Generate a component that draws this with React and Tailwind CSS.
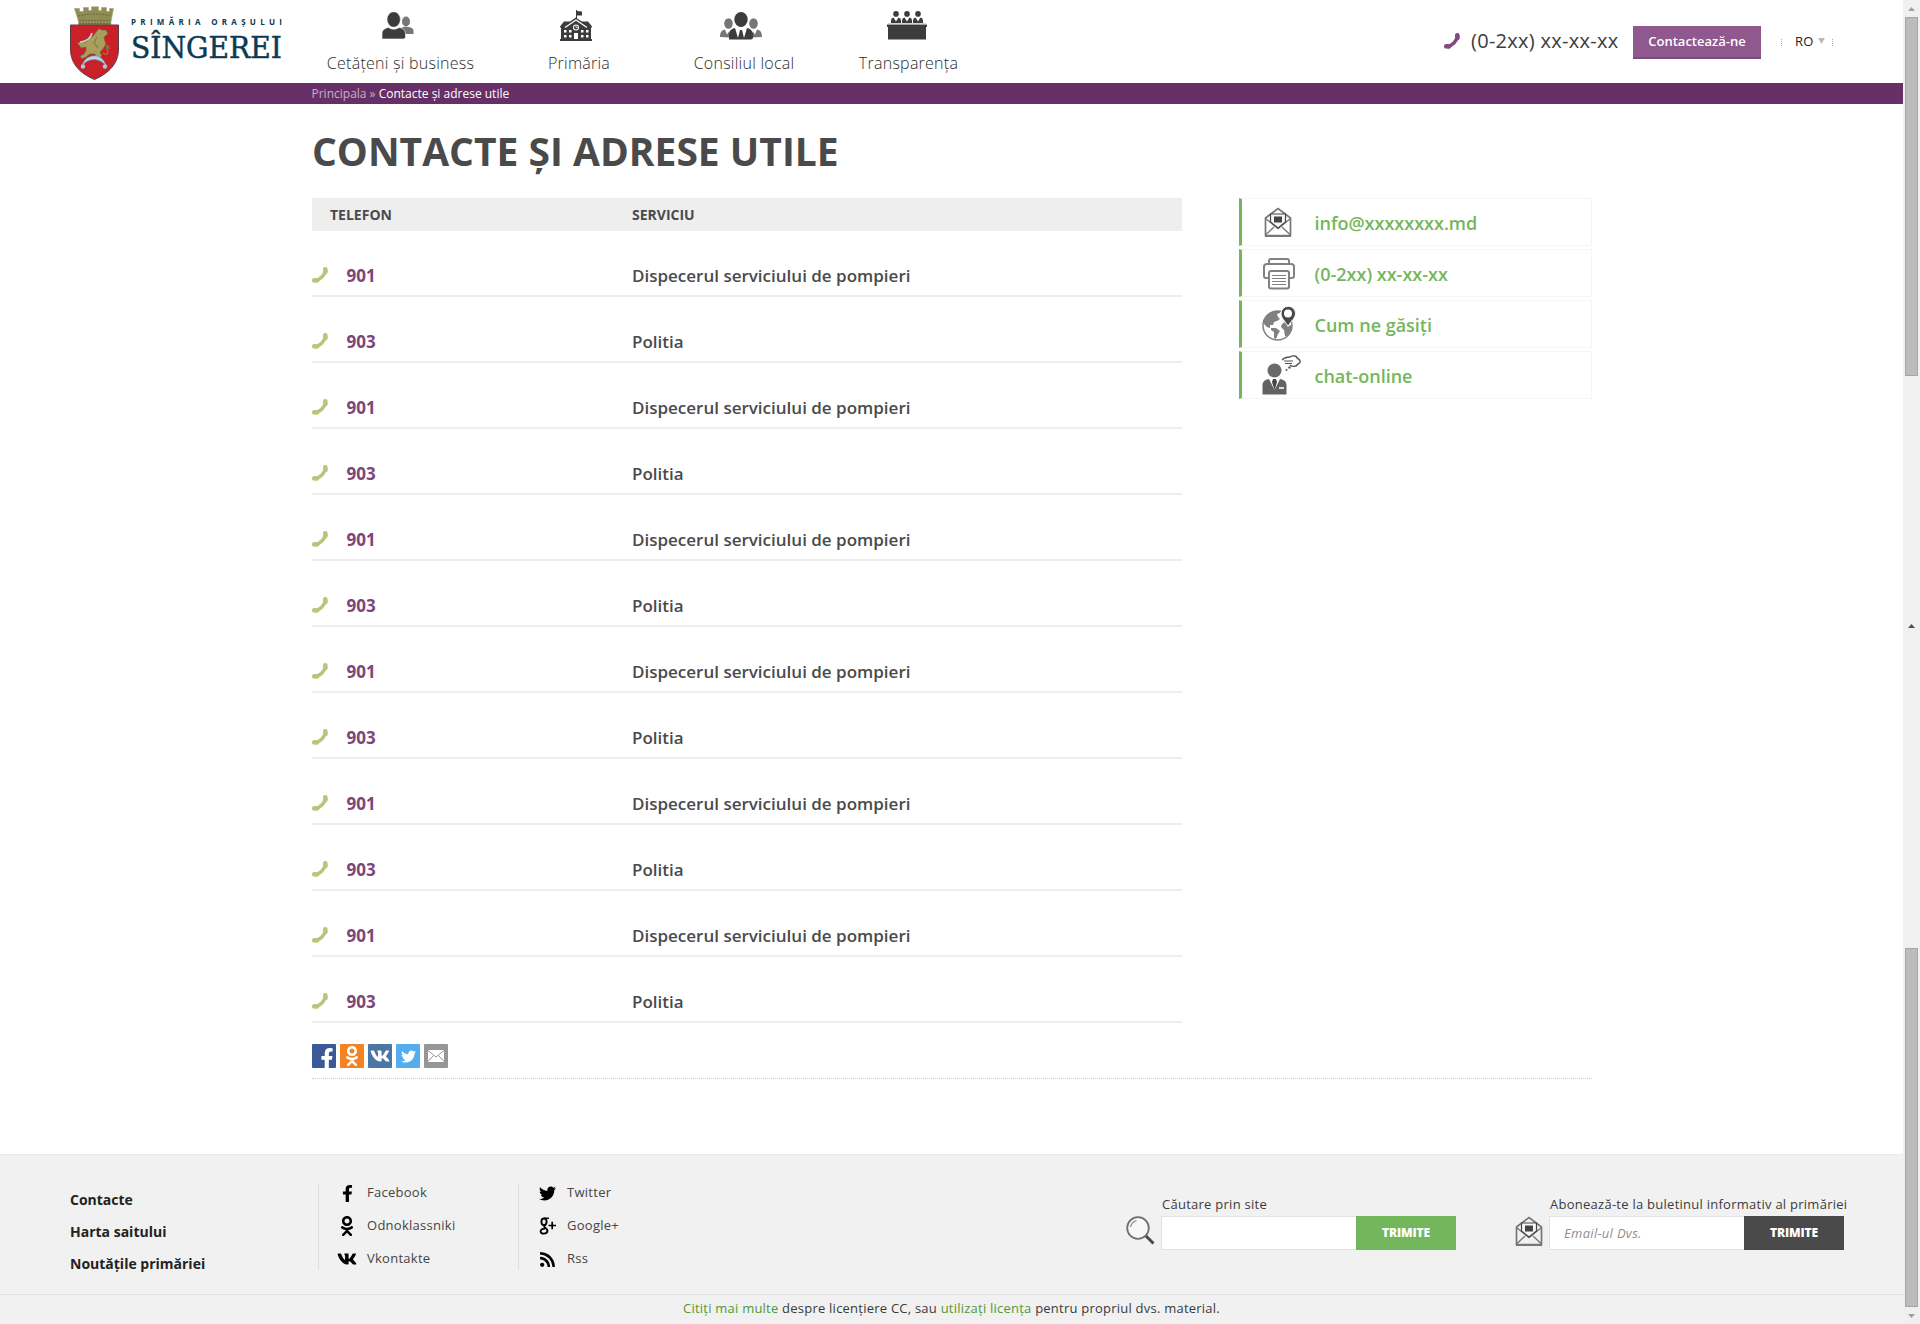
import React from "react";
import { FaFacebookF, FaTwitter, FaVk, FaOdnoklassniki, FaRss } from "react-icons/fa";

function Crest() {
  return (
    <svg width="51" height="77" viewBox="0 0 51 77" className="mt-px block shrink-0">
      <path d="M5.500 2.500h5v3h4V1.500h5v3h3V.800h7v3.700h3V1.500h5v4h3v-3h4l-2.500 13v4.500H9.500v-4.500z" fill="#8f8c55" stroke="#a5a374" strokeWidth=".6" />
      <path d="M9 10q17-4 33 0M10 14.500h31M10 17.500h31" stroke="#6d6b3b" strokeWidth="1" strokeDasharray="2 1" fill="none" />
      <path d="M1.500 19h48v24c0 14-9 24-24 30.500C10 67 1.500 57 1.500 43z" fill="#c9202a" stroke="#5c3c40" />
      <path d="M27 26l3-3.500 3 1.500 4 0 2 4-3 2-1 2 2 6-3 5-3 3 2 4-3 2-3-1-1-3-5 0-4 3-4 2-2-3 4-2 2-4 0-3-5 1-2-3-2-2 3-1 6 0 4-4 3-2z" fill="#a89f5c" stroke="#6a5f34" strokeWidth=".6" />
      <path d="M34 47c4 3 6 0 4-4s2-5 2 0M28 31l-3 6 4 5" stroke="#8b8045" strokeWidth="1.300" fill="none" />
      <path d="M11 36c6 0 11-4 12-9" stroke="#bcd9ec" strokeWidth="1.700" fill="none" />
      <path d="M13 60c3-13 21-14 24 0-6-8-17-9-24 0z" fill="#b5d6ea" stroke="#6f8ba3" strokeWidth=".6" />
      <circle cx="14" cy="60.500" r="2.200" fill="#a5c8e4" />
      <circle cx="36" cy="60.500" r="2.200" fill="#a5c8e4" />
    </svg>
  );
}

function Logo() {
  return (
    <div className="flex h-[83px] w-[230px] items-start pt-[5px]">
      <Crest />
      <svg width="166" height="70" viewBox="0 0 166 70" className="ml-[11px] block shrink-0 overflow-visible">
        <text x="0" y="19.500" textLength="151" fontFamily="Open Sans, sans-serif" fontWeight="700" fontSize="8" fill="#0b3a54">PRIMĂRIA ORAȘULUI</text>
        <text x="0" y="53" textLength="151" lengthAdjust="spacingAndGlyphs" fontFamily="DejaVu Serif, serif" fontSize="30" fill="#0b3a54" stroke="#0b3a54" strokeWidth=".5">SÎNGEREI</text>
      </svg>
    </div>
  );
}

function Phone({ className }) {
  return (
    <svg width="16" height="16" viewBox="0 0 16 16" className={className} fill="none" stroke="currentColor" strokeLinecap="round">
      <path d="M3 13.500C8 13 13 8 13.500 3" strokeWidth="3.600" />
      <path d="M2.300 13.300l2.600.2M13.300 2.300l.2 2.600" strokeWidth="4.600" />
    </svg>
  );
}

const CitizensIcon = () => (
  <svg width="32" height="28" viewBox="0 0 32 28">
    <g fill="#777"><ellipse cx="24" cy="9.500" rx="4" ry="5" /><path d="M19 22v-6c3-2 11-2 12.500 2v4z" /></g>
    <g fill="#3c3c3c" stroke="#fff" strokeWidth=".6"><ellipse cx="11.700" cy="7.500" rx="6.700" ry="7.800" /><path d="M0 27v-5c0-4 3-6 6.500-6.500 3 2.300 7.500 2.300 10.500 0 3.500.5 6.500 3 6.500 6.500v3q0 2-2 2z" /></g>
  </svg>
);

const TownHallIcon = () => (
  <svg width="32" height="31" viewBox="0 0 32 31" fill="#3c3c3c">
    <path d="M16 0h1v1l5 .500v4h-5v3l5 3h6l4 5v1H0v-1l4-5h6l6-4z" />
    <path d="M1 17h30v12h1v2H0v-2h1z" />
    <path d="M5 17.500L16 10l11 7.500" fill="none" stroke="#fff" strokeWidth="1.200" />
    <circle cx="16" cy="17.500" r="3" fill="#fff" /><circle cx="16" cy="17.500" r="2" />
    <path d="M16 15.500v2h1.500" stroke="#fff" strokeWidth=".7" fill="none" />
    <path d="M14 23h4v6h-4zM4 20h2.500v2.500H4zM9 20h2.500v2.500H9zM21 20h2.500v2.500H21zM26 20h2.500v2.500H26zM4 25h2.500v2.500H4zM9 25h2.500v2.500H9zM21 25h2.500v2.500H21zM26 25h2.500v2.500H26z" fill="#fff" />
  </svg>
);

const CouncilIcon = () => (
  <svg width="42" height="28" viewBox="0 0 42 28">
    <g fill="#777"><ellipse cx="8.500" cy="11.500" rx="4.300" ry="5.200" /><ellipse cx="33.500" cy="11.500" rx="4.300" ry="5.200" /><path d="M0 25c0-5 2-7 5-7.500l2 5 2-3 2 6zM42 25c0-5-2-7-5-7.500l-2 5-2-3-2 6z" /></g>
    <g fill="#3c3c3c"><ellipse cx="21" cy="7.500" rx="6.700" ry="7.500" /><path d="M9 27.500v-5c0-4 3-6 6-6.500l3 10 2-8h2l2 8 3-10c3 .5 6 3 6 6.500v3q0 2-2 2z" /></g>
  </svg>
);

const PanelIcon = () => (
  <svg width="40" height="29" viewBox="0 0 40 29" fill="#3c3c3c">
    {[9, 20, 31].map((x) => (
      <g key={x}>
        <circle cx={x} cy="2.900" r="2.800" />
        <path d={`M${x - 5} 12V9.500q0-2.500 2.500-3l2.500 4 2.500-4q2.500.5 2.500 3v2.500z`} />
      </g>
    ))}
    <path d="M0 13.500h40v2.500H0zM1 15h38v13.500H1z" />
    <path d="M1 12.700h38" stroke="#c3cccc" strokeWidth="1" />
  </svg>
);

const nav = [
  { label: "Cetățeni și business", icon: <CitizensIcon />, box: "w-[147px] ml-[38px]", iconPos: "h-[39px] pt-3 pr-[6px]" },
  { label: "Primăria", icon: <TownHallIcon />, box: "w-[64px] ml-[73px]", iconPos: "h-[39px] pt-[10px] pr-[6px]" },
  { label: "Consiliul local", icon: <CouncilIcon />, box: "w-[102px] ml-[82px]", iconPos: "h-[39px] pt-3 pr-[6px]" },
  { label: "Transparența", icon: <PanelIcon />, box: "w-[101px] ml-[63px]", iconPos: "h-[39px] pt-[11px] pr-[4px]" },
];

function Header() {
  return (
    <header className="flex h-[83px] pl-[69px]">
      <div className="w-[220px]"><Logo /></div>
      <nav className="flex">
        {nav.map((n) => (
          <a key={n.label} className={`flex flex-col items-center ${n.box}`}>
            <span className={n.iconPos}>{n.icon}</span>
            <span className="mt-[12px] text-[16px] leading-[24px] font-light tracking-[0.25px] whitespace-nowrap text-[#2c2c2c]">{n.label}</span>
          </a>
        ))}
      </nav>
      <div className="mr-[70px] ml-auto flex h-[83px] items-start">
        <Phone className="mt-[33px] text-[#7f4c80]" />
        <span className="mt-[27px] ml-[11px] w-[162px] text-[20px] leading-[28px] font-medium tracking-[0.28px] whitespace-nowrap text-[#3c3c3c]">(0-2xx) xx-xx-xx</span>
        <button className="mt-[26px] h-[33px] w-[128px] border-b-2 border-[#7c4c7d] bg-[#8f588e] text-[13px] font-semibold text-white">Contactează-ne</button>
        <div className="mt-[39px] ml-5 h-[7px] border-l border-dotted border-[#aaa]" />
        <span className="mt-[31px] ml-[13px] w-[18px] text-[13px] leading-5 tracking-[0.2px] text-[#222]">RO</span>
        <svg width="7" height="6" viewBox="0 0 7 6" className="mt-[38px] ml-[5px]"><path d="M0 0h7L3.500 6z" fill="#b9b9b9" /></svg>
        <div className="mt-[39px] ml-[7px] h-[7px] border-l border-dotted border-[#aaa]" />
      </div>
    </header>
  );
}

const MailIcon = ({ className }) => (
  <svg width="28" height="31" viewBox="0 0 28 31" className={className} fill="none" stroke="#777" strokeWidth="1.700">
    <path d="M1.500 11L14 1.500 26.500 11v17.500h-25z" />
    <path d="M1.500 28L10 20M26.500 28L18 20M1.500 11.500L14 21.500l12.500-10" strokeWidth="1.400" />
    <path d="M6.500 15V7h15v8L14 21z" fill="#f7f7f7" stroke="#444" strokeWidth="1.200" />
    <path d="M1 29h26" strokeWidth="2" />
    <path d="M10 9.500h8v6h-8z" fill="#444" stroke="none" />
  </svg>
);

const PrinterIcon = () => (
  <svg width="32" height="32" viewBox="0 0 32 32" fill="none" stroke="#828282" strokeWidth="2">
    <path d="M6 6V3q0-2 2-2h16q2 0 2 2v3" />
    <path d="M6 20H3q-2 0-2-2V9q0-3 3-3h24q3 0 3 3v9q0 2-2 2h-3" />
    <rect x="6" y="13" width="20" height="17.500" rx="2" fill="#fff" />
    <path d="M9 17.500h14M9 20.500h14M9 23.500h14M9 26.500h14" strokeWidth="1" />
  </svg>
);

const GlobeIcon = () => (
  <svg width="34" height="35" viewBox="0 0 34 35">
    <circle cx="15.500" cy="19.500" r="14.500" fill="#fff" stroke="#808080" strokeWidth="1.500" />
    <path d="M1.500 16C3 10 7 6 13 5l5 0 0 2-3 1 1 3 2 2-3 2-3 1-1 3-3 0 0 3-3-1-3-3zM9 22l5 0 4 3-2 3-2 5-2-1 0-6-3-2zM20 18l3-2 3 4 4-1-1 6-4 5-2 0-1-6-3-3z" fill="#808080" />
    <path d="M26 20.500c-3-6-7-8-7-13a7 7 0 0 1 14.500 0c0 5-4.500 7-7.500 13z" fill="#484848" stroke="#fff" strokeWidth="1" />
    <circle cx="26" cy="7.500" r="4" fill="#fff" />
  </svg>
);

const ChatIcon = () => (
  <svg width="39" height="40" viewBox="0 0 39 40">
    <circle cx="12.500" cy="15.500" r="7" fill="#6a6a6a" />
    <path d="M.500 39.500V30q0-5 6.500-6l5.500 11L18 24q6.500 1 6.500 6v9.500z" fill="#626262" />
    <path d="M11 24h3l1 3-2.500 8-2.500-8z" fill="#444" />
    <path d="M17 32h5v2h-5z" fill="#ddd" />
    <path d="M20 5c3-3 5-3 8-3 3-2 7-1 7 1 4 2 4 5 1 6-2 3-6 3-8 1" fill="none" stroke="#555" strokeWidth="1.400" />
    <path d="M22 6h9M23 8.500h7" stroke="#555" strokeWidth="1.100" />
    <circle cx="27.500" cy="12.500" r="1.200" fill="#555" /><circle cx="24.500" cy="15" r="1" fill="#555" />
  </svg>
);

const links = [
  { label: "info@xxxxxxxx.md", icon: <MailIcon />, pos: "pt-[9px] pl-[22px]" },
  { label: "(0-2xx) xx-xx-xx", icon: <PrinterIcon />, pos: "pt-[9px] pl-[21px]" },
  { label: "Cum ne găsiți", icon: <GlobeIcon />, pos: "pt-[6px] pl-[20px]" },
  { label: "chat-online", icon: <ChatIcon />, pos: "pt-[4px] pl-[20px]" },
];

const rows = Array.from({ length: 12 }, (_, i) =>
  i % 2 === 0 ? ["901", "Dispecerul serviciului de pompieri"] : ["903", "Politia"]
);

function Share() {
  const tile = "flex h-6 w-6 items-center justify-center rounded-[1px] text-white";
  return (
    <div className="mt-[21px] flex gap-1">
      <span className={`${tile} items-end! bg-[#3b5998] pl-[6px]`}><FaFacebookF size={21} className="-mb-px" /></span>
      <span className={`${tile} bg-[#f58220]`}><FaOdnoklassniki size={20} /></span>
      <span className={`${tile} bg-[#4d75a3]`}><FaVk size={20} /></span>
      <span className={`${tile} bg-[#55acee]`}><FaTwitter size={15} /></span>
      <span className={`${tile} bg-[#969696]`}>
        <svg width="16" height="12" viewBox="0 0 16 12"><path d="M0 0h16v12H0z" fill="#fff" /><path d="M0 .5l8 6.500 8-6.500M0 11.500L5.500 5.500M16 11.500L10.500 5.500" stroke="#969696" fill="none" /></svg>
      </span>
    </div>
  );
}

const GooglePlus = () => (
  <svg width="17" height="18" viewBox="0 0 17 18" fill="none" stroke="#000">
    <ellipse cx="5" cy="4.800" rx="2.600" ry="3.300" strokeWidth="1.900" />
    <path d="M5 1.200h5" strokeWidth="1.400" />
    <path d="M6.500 8c-2 1.200-1.500 2 0 3 3 2 2.500 5.500-1.700 5.600C.5 16.700.2 12 6 11.600" strokeWidth="1.900" />
    <path d="M9.500 8.500H17M13.200 4.800v7.400" strokeWidth="1.700" />
  </svg>
);

function Footer() {
  const social = [
    [["Facebook", <FaFacebookF size={17} />], ["Odnoklassniki", <FaOdnoklassniki size={20} />], ["Vkontakte", <FaVk size={20} />]],
    [["Twitter", <FaTwitter size={17} />], ["Google+", <GooglePlus />], ["Rss", <FaRss size={17} />]],
  ];
  return (
    <footer className="mt-[75px] h-[170px] border-t border-[#ebebeb] bg-[#f1f1f1]">
      <div className="flex h-[139px] pl-[70px]">
        <ul className="w-[248px] pt-[29px] text-[14px] leading-[32px] font-bold text-[#222]">
          <li>Contacte</li><li>Harta saitului</li><li>Noutățile primăriei</li>
        </ul>
        {social.map((col, i) => (
          <ul key={i} className="mt-[29px] h-[86px] w-[200px] border-l border-[#dedede] pl-[18px] text-[13px] tracking-[0.27px] text-[#444]">
            {col.map(([t, icon]) => (
              <li key={t} className="flex h-[33px] items-start">
                <span className="-mt-px flex h-[20px] w-[20px] items-center justify-center text-black">{icon}</span>
                <span className="-mt-px ml-[10px] leading-[18px]">{t}</span>
              </li>
            ))}
          </ul>
        ))}
        <svg width="29" height="29" viewBox="0 0 29 29" className="mt-[61px] ml-[408px]" fill="none">
          <circle cx="12" cy="12" r="10.800" stroke="#6f6f6f" strokeWidth="1.800" fill="#f7f7f7" />
          <path d="M4.500 11q1-5 6-6.500" stroke="#888" strokeWidth="1.200" />
          <path d="M20 20l7.500 7.500" stroke="#4a4a4a" strokeWidth="3" />
        </svg>
        <Form label="Căutare prin site" button="bg-[#74b65c]" className="ml-[6px]" />
        <MailIcon className="mt-[61px] ml-[59px]" />
        <Form label="Abonează-te la buletinul informativ al primăriei" placeholder="Email-ul Dvs." button="bg-[#4a4a4a]" className="ml-[6px]" />
      </div>
      <div className="border-t border-[#dfdfdf] pt-[4px] text-center text-[13px] leading-[18px] tracking-[0.23px] text-[#3a3a3a]">
        <span className="text-[#4f9a35]">Citiți mai multe</span> despre licențiere CC, sau <span className="text-[#4f9a35]">utilizați licența</span> pentru propriul dvs. material.
      </div>
    </footer>
  );
}

function Form({ label, placeholder, button, className }) {
  return (
    <div className={`w-[295px] pt-[40px] ${className}`}>
      <div className="h-[21px] pl-px text-[13px] leading-[18px] tracking-[0.26px] whitespace-nowrap text-[#3c3c3c]">{label}</div>
      <div className="flex h-[34px]">
        <div className="w-[195px] border border-r-0 border-[#e2e2e2] bg-white pl-[14px] text-[13px] leading-[32px] tracking-[0.3px] text-[#8f8f8f] italic">{placeholder}</div>
        <button className={`w-[100px] text-[12px] font-extrabold tracking-[-0.15px] text-white ${button}`}>TRIMITE</button>
      </div>
    </div>
  );
}

const Arrow = ({ down, className }) => (
  <svg width="7" height="4" viewBox="0 0 7 4" className={className}><path d={down ? "M0 0h7L3.500 4z" : "M0 4h7L3.500 0z"} fill="currentColor" /></svg>
);

function Scrollbar() {
  return (
    <div className="flex w-[17px] flex-col items-center bg-[#f0f0f0]">
      <div className="flex h-[17px] items-center text-[#a0a0a0]"><Arrow /></div>
      <div className="h-[359px] w-[13px] border border-[#a6a6a6] bg-[#bcbcbc]" />
      <div className="mt-[248px] h-[4px] text-[#505050]"><Arrow /></div>
      <div className="mt-[320px] h-[359px] w-[13px] border border-[#a6a6a6] bg-[#bcbcbc]" />
      <div className="flex h-[17px] items-center text-[#a0a0a0]"><Arrow down /></div>
    </div>
  );
}

export default function App() {
  return (
    <div className="flex h-[1324px] w-[1920px] overflow-hidden bg-white font-['Open_Sans',sans-serif] text-[#4a4a4a]">
      <div className="w-[1903px]">
        <Header />
        <div className="h-[21px] bg-[#663066] pl-[311.5px] text-[12px] leading-[21px] text-[#c9aecb]">
          Principala » <span className="text-white">Contacte și adrese utile</span>
        </div>
        <main className="ml-[312px] w-[1280px]">
          <h1 className="h-[94px] pt-[21px] text-[39px] leading-[52px] font-bold whitespace-nowrap">CONTACTE ȘI ADRESE UTILE</h1>
          <div className="flex justify-between">
            <div className="w-[870px]">
              <div className="flex h-[33px] bg-[#eee] text-[14px] leading-[33px] font-bold">
                <span className="w-[320px] pl-[18px]">TELEFON</span><span>SERVICIU</span>
              </div>
              {rows.map(([n, s], i) => (
                <div key={i} className="flex h-[66px] items-end border-b-2 border-[#eee] pb-[7px] text-[17px] leading-[24px]">
                  <Phone className="mb-[5px] text-[#b5c77b]" />
                  <span className="ml-[18.5px] w-[285.5px] font-bold text-[#7a4778]">{n}</span>
                  <span className="font-semibold">{s}</span>
                </div>
              ))}
              <Share />
            </div>
            <div className="flex w-[353px] flex-col gap-[3px]">
              {links.map((l) => (
                <a key={l.label} className="flex h-[48px] border border-l-3 border-[#f5f5f5] border-l-[#74b65c] text-[18px] leading-[48px] font-semibold text-[#74b65c]">
                  <span className={`w-[72.500px] ${l.pos} -mt-px`}>{l.icon}</span>{l.label}
                </a>
              ))}
            </div>
          </div>
          <div className="mt-[10px] border-t border-dotted border-[#ccc]" />
        </main>
        <Footer />
      </div>
      <Scrollbar />
    </div>
  );
}
